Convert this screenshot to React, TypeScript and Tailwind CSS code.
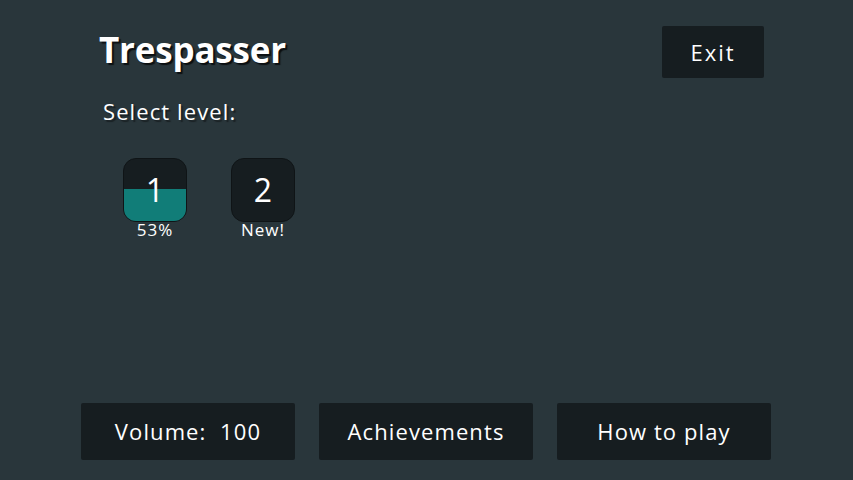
export default function App() {
  const levels = [
    { n: 1, label: '53%', fill: 52 },
    { n: 2, label: 'New!', fill: 0 },
  ]

  return (
    <div className="w-full h-[480px] bg-[#29363b] text-white flex flex-col font-['Open_Sans',sans-serif] overflow-hidden">
      <div className="flex justify-between items-start pl-[99px] pr-[89px] pt-[26px]">
        <div>
          <h1 className="text-[35px] font-bold leading-[48px] tracking-[-0.2px] [text-shadow:2px_2px_1px_#0c1012]">Trespasser</h1>
          <p className="mt-[23px] ml-[4px] text-[22px] leading-[29px] tracking-[1.1px] [text-shadow:2px_2px_1px_#1a2124]">Select level:</p>
        </div>
        <button className="w-[102px] h-[52px] bg-[#161d20] rounded-[2px] text-[22px] tracking-[2px] flex items-center justify-center">Exit</button>
      </div>

      <div className="flex gap-[44px] pl-[123px] mt-[32px]">
        {levels.map((lv) => (
          <div key={lv.n} className="flex flex-col items-center w-[64px]">
            <div className="relative w-[64px] h-[64px] rounded-[13px] bg-[#161d20] border border-[#0f1416] overflow-hidden flex items-center justify-center">
              <div className="absolute left-0 right-0 bottom-0 bg-[#117d78]" style={{ height: `${lv.fill}%` }} />
              <span className="relative text-[32px] leading-none">{lv.n}</span>
            </div>
            <span className="text-[17px] leading-[18px] tracking-[1px] -mt-[1px] whitespace-nowrap">{lv.label}</span>
          </div>
        ))}
      </div>

      <div className="mt-auto mb-[20px] flex gap-[24px] pl-[81px]">
        {['Volume:  100', 'Achievements', 'How to play'].map((t) => (
          <button key={t} className="w-[214px] h-[57px] bg-[#161d20] rounded-[2px] text-[22px] tracking-[1.1px] whitespace-pre flex items-center justify-center">{t}</button>
        ))}
      </div>
    </div>
  )
}
